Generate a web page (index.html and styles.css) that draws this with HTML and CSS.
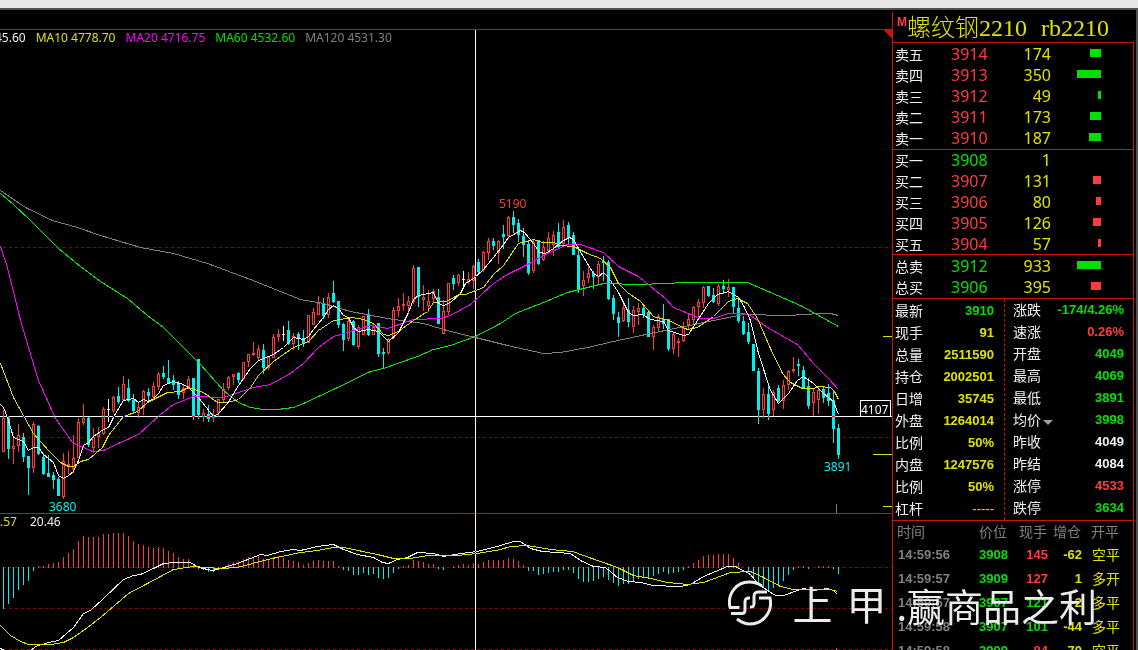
FILE: index.html
```html
<!DOCTYPE html>
<html lang="zh-CN">
<head>
<meta charset="utf-8">
<title>螺纹钢2210 rb2210</title>
<link rel="stylesheet" href="styles.css">
</head>
<body>
<div class="toolbar"></div>
<main class="terminal">
  <section class="chart">
    <svg class="plot" viewBox="0 10 892 640" preserveAspectRatio="xMaxYMin slice" role="img" aria-label="K线与MACD">
      <path class="grid" d="M3 247.500H892M3 437.500H892M3 567.500H892M3 608.500H892M3 649.500H892"/>
      <path class="frame" d="M0 29.500H892M0 513.500H892"/>
      <path class="corner" d="M882 29H892V39Z"/>
      <path class="tick" d="M883 336.500H892M873 454.500H892M883 506.500H892"/>
      <path class="mark" d="M836.500 504V513M836.500 648V650"/>
      <g id="macd"></g>
      <g id="candles"></g>
      <g id="lines"></g>
      <text class="note up" x="499" y="208">5190</text>
      <text class="note down" x="49" y="511">3680</text>
      <text class="note down" x="824" y="471">3891</text>
      <path class="cross" d="M0 416.500H892M475.500 30V650"/>
      <rect class="tagbox" x="860.500" y="400.500" width="30" height="16"/>
      <text class="note tag" x="861" y="414">4107</text>
    </svg>
    <div class="pane price">
      <span class="c-white">45.60</span><span class="c-yellow">MA10 4778.70</span><span class="c-magenta">MA20 4716.75</span><span class="c-green">MA60 4532.60</span><span class="c-grey">MA120 4531.30</span>
    </div>
    <div class="pane macd"><span class="c-yellow">.57</span><span class="c-white">20.46</span></div>
  </section>

  <aside class="quote">
    <h1 class="title"><sup>M</sup><span>螺纹钢2210</span><span>rb2210</span></h1>

    <div class="box">
      <table class="book">
        <tbody>
          <tr><th>卖五</th><td class="c-red">3914</td><td class="c-yellow">174</td><td><i class="bar sell" style="width:11px"></i></td></tr>
          <tr><th>卖四</th><td class="c-red">3913</td><td class="c-yellow">350</td><td><i class="bar sell" style="width:24px"></i></td></tr>
          <tr><th>卖三</th><td class="c-red">3912</td><td class="c-yellow">49</td><td><i class="bar sell" style="width:3px"></i></td></tr>
          <tr><th>卖二</th><td class="c-red">3911</td><td class="c-yellow">173</td><td><i class="bar sell" style="width:11px"></i></td></tr>
          <tr><th>卖一</th><td class="c-red">3910</td><td class="c-yellow">187</td><td><i class="bar sell" style="width:12px"></i></td></tr>
        </tbody>
        <tbody>
          <tr><th>买一</th><td class="c-green">3908</td><td class="c-yellow">1</td><td></td></tr>
          <tr><th>买二</th><td class="c-red">3907</td><td class="c-yellow">131</td><td><i class="bar buy" style="width:8px"></i></td></tr>
          <tr><th>买三</th><td class="c-red">3906</td><td class="c-yellow">80</td><td><i class="bar buy" style="width:5px"></i></td></tr>
          <tr><th>买四</th><td class="c-red">3905</td><td class="c-yellow">126</td><td><i class="bar buy" style="width:8px"></i></td></tr>
          <tr><th>买五</th><td class="c-red">3904</td><td class="c-yellow">57</td><td><i class="bar buy" style="width:3px"></i></td></tr>
        </tbody>
        <tbody class="total">
          <tr><th>总卖</th><td class="c-green">3912</td><td class="c-yellow">933</td><td><i class="bar sell" style="width:24px"></i></td></tr>
          <tr><th>总买</th><td class="c-green">3906</td><td class="c-yellow">395</td><td><i class="bar buy" style="width:10px"></i></td></tr>
        </tbody>
      </table>

      <div class="stats">
        <table class="stat left">
          <tbody>
            <tr><th>最新</th><td class="c-green">3910</td></tr>
            <tr><th>现手</th><td class="c-yellow">91</td></tr>
            <tr><th>总量</th><td class="c-yellow">2511590</td></tr>
            <tr><th>持仓</th><td class="c-yellow">2002501</td></tr>
            <tr><th>日增</th><td class="c-yellow">35745</td></tr>
            <tr><th>外盘</th><td class="c-yellow">1264014</td></tr>
            <tr><th>比例</th><td class="c-yellow">50%</td></tr>
            <tr><th>内盘</th><td class="c-yellow">1247576</td></tr>
            <tr><th>比例</th><td class="c-yellow">50%</td></tr>
            <tr><th>杠杆</th><td class="c-yellow dash">-----</td></tr>
          </tbody>
        </table>
        <table class="stat right">
          <tbody>
            <tr><th>涨跌</th><td class="c-green">-174/4.26%</td></tr>
            <tr><th>速涨</th><td class="c-red">0.26%</td></tr>
            <tr><th>开盘</th><td class="c-green">4049</td></tr>
            <tr><th>最高</th><td class="c-green">4069</td></tr>
            <tr><th>最低</th><td class="c-green">3891</td></tr>
            <tr><th>均价<button class="drop" type="button" aria-label="均价"></button></th><td class="c-green">3998</td></tr>
            <tr><th>昨收</th><td class="c-white">4049</td></tr>
            <tr><th>昨结</th><td class="c-white">4084</td></tr>
            <tr><th>涨停</th><td class="c-red">4533</td></tr>
            <tr><th>跌停</th><td class="c-green">3634</td></tr>
          </tbody>
        </table>
      </div>

      <table class="trades">
        <thead><tr><th>时间</th><th>价位</th><th>现手</th><th>增仓</th><th>开平</th></tr></thead>
        <tbody>
          <tr><td>14:59:56</td><td class="c-green">3908</td><td class="c-red">145</td><td class="c-yellow">-62</td><td class="c-yellow kind">空平</td></tr>
          <tr><td>14:59:57</td><td class="c-green">3909</td><td class="c-red">127</td><td class="c-yellow">1</td><td class="c-yellow kind">多开</td></tr>
          <tr><td>14:59:57</td><td class="c-green">3907</td><td class="c-green">121</td><td class="c-yellow">-2</td><td class="c-yellow kind">多平</td></tr>
          <tr><td>14:59:58</td><td class="c-green">3907</td><td class="c-green">101</td><td class="c-yellow">-44</td><td class="c-yellow kind">多平</td></tr>
          <tr><td>14:59:58</td><td class="c-green">3909</td><td class="c-red">84</td><td class="c-yellow">-70</td><td class="c-yellow kind">空平</td></tr>
        </tbody>
      </table>
    </div>
  </aside>

  <div class="watermark">
    <svg class="logo" viewBox="0 0 44 46" aria-hidden="true">
      <path d="M2 27.500C-1 13 9 2 21 2C26 2 30 3 34 6M1 27.500H11.500M3 33.500H14C16.500 33.500 17 32 17 30V22C17 19 18 18 21 18H22M22 27H23C25.500 27 26 26 26 23V17C26 13 27 12 30 12H39M31 18H42C45 32 35 44 22 44C17 44 13 42 9 39"/>
    </svg>
    <span class="brand"><span>上</span><span>甲</span></span>
    <span class="motto">.赢商品之利</span>
  </div>
</main>
<script src="chart.js"></script>
</body>
</html>
```

FILE: styles.css
```css
* { box-sizing: border-box; }

body {
  margin: 0;
  height: 100vh;
  overflow: hidden;
  display: flex;
  flex-direction: column;
  background: #000;
  color: #f0f0f0;
  font-family: "Noto Sans", "Noto Sans CJK SC", sans-serif;
}

.toolbar {
  flex: none;
  height: 10px;
  background: #e6e6e6;
  border-bottom: 2px solid #505050;
}

.terminal {
  position: relative;
  flex: 1;
  min-height: 0;
  display: flex;
  border-right: 2px solid #505050;
}

.c-white { color: #f0f0f0; }
.c-yellow { color: #e1e100; }
.c-magenta { color: #f0f; }
.c-green { color: #00e100; }
.c-grey { color: #808080; }
.c-red { color: #ff3c3c; }

/* chart */
.chart {
  position: relative;
  flex: 1;
  min-width: 0;
  display: flex;
  flex-direction: column;
  padding-top: 20px;
}

.plot {
  position: absolute;
  inset: 0;
  width: 100%;
  height: 100%;
  shape-rendering: crispEdges;
}

.pane {
  display: flex;
  gap: 10px;
  font-size: 12px;
  line-height: 16px;
  white-space: nowrap;
}
.pane.price { flex: 0 0 484px; margin-left: -5px; }
.pane.macd { gap: 13px; }

.plot path, .plot polyline { fill: none; }
.plot .grid { stroke: #8c0000; stroke-dasharray: 3 3; }
.plot .frame { stroke: #c8140a; }
.plot path.corner { fill: #c8140a; }
.plot .tick { stroke: #e1e100; }
.plot .mark { stroke: #808080; }
.plot .cross { stroke: #fff; mix-blend-mode: difference; }
.plot .tagbox { fill: #000; stroke: #fff; }
.plot .rise { stroke: #ff3c3c; fill: #000; }
.plot .fall { stroke: #00f0f0; }
.plot .body { fill: #00f0f0; }
.plot .flat { stroke: #f0f0f0; }
.plot .ma5 { stroke: #f0f0f0; }
.plot .ma10 { stroke: #e1e100; }
.plot .ma20 { stroke: #f0f; }
.plot .ma60 { stroke: #00f000; }
.plot .ma120 { stroke: #808080; }

.note { font-size: 12px; }
.note.up { fill: #ff3c3c; }
.note.down { fill: #00f0f0; }
.note.tag { fill: #fff; }

/* quote panel */
.quote {
  flex: 0 0 242px;
  margin: 2px 2px 0 0;
  border-left: 1px solid #c8140a;
}

.title {
  display: flex;
  margin: 0;
  padding-left: 4px;
  height: 30px;
  font: 300 24px/32px "Liberation Serif", "Noto Sans CJK SC", serif;
  color: #e1e100;
  white-space: nowrap;
}
.title sup { font: 700 12px/20px "Liberation Sans", sans-serif; color: #ff3c3c; }
.title span + span { margin-left: 14px; }

.box {
  border-top: 1px solid #c8140a;
  border-right: 1px solid #c8140a;
}

table { display: block; border-spacing: 0; }
thead, tbody { display: block; }
th, td { padding: 0; text-align: left; }
th { font: 400 14px/20px "Noto Sans CJK SC", sans-serif; }

.book { font-size: 16px; line-height: 21px; }
.book tbody { border-bottom: 1px solid #c8140a; }
.book tbody.total { padding-top: 1px; }
.book tr {
  display: grid;
  grid-template-columns: 56px 60px 40px 50px;
  height: 21px;
  padding-left: 2px;
}
.book tbody:first-child { padding-top: 1px; }
.book tbody:nth-child(2) tr:last-child { height: 20px; }
.book td:nth-child(3) { text-align: right; }
.book td:last-child { display: flex; justify-content: flex-end; padding-top: 5px; }
.bar { height: 8px; }
.bar.sell { background: #00e100; }
.bar.buy { background: #ff3c3c; }

.stats {
  display: flex;
  border-bottom: 1px solid #c8140a;
}
.stat tr { display: flex; justify-content: space-between; height: 22px; }
.stat td { font: 700 13px/22px "Liberation Sans", sans-serif; }
.stat td.dash { font-weight: 400; }
.stat.left {
  flex: 0 0 112px;
  padding: 1px 10px 0 2px;
  border-right: 1px dashed #c8140a;
}
.stat.right { flex: 1; padding: 0 9px 0 8px; }
.drop {
  width: 10px;
  height: 5px;
  margin-left: 2px;
  padding: 0;
  border: 0;
  background: #a0a0a0;
  clip-path: polygon(0 0, 100% 0, 50% 100%);
}

.trades { font: 700 13px/24px "Liberation Sans", sans-serif; color: #808080; }
.trades tr {
  display: grid;
  grid-template-columns: 65px 45px 40px 34px 38px;
  padding-left: 5px;
}
.trades thead tr { height: 22px; padding-left: 4px; }
.trades th + th, .trades td + td { text-align: right; }
.trades td.kind { font: 400 14px/22px "Noto Sans CJK SC", sans-serif; }

/* watermark laid over chart and panel */
.watermark {
  position: absolute;
  right: 39px;
  bottom: 16px;
  display: flex;
  align-items: center;
  color: #ececec;
  font-family: "Noto Sans CJK SC", sans-serif;
  line-height: 54px;
  white-space: nowrap;
  pointer-events: none;
}
.logo { width: 44px; height: 46px; margin: 0 20px 4px 0; }
.logo path { fill: none; stroke: #ececec; stroke-width: 3; }
.brand { display: flex; gap: 14px; margin: 0 10px 4px 0; font-size: 40px; }
.motto { font-size: 38px; }
```

FILE: chart.js
```js
// Each bar sits 5px apart: kind, high, low, body top, body bottom (plot units).
const bars = `r410 452 418 452,c416 459 418 449,r438 464 446 449,r424 452 435 446,c433 462 437 457,c456 495 456 468,r422 473 424 468,c425 455 426 454,c453 475 457 474,c455 477 473 477,c472 489 475 480,c477 496 479 496,r453 499 461 497,r451 474 464 466,r435 473 458 469,r418 458 422 458,r404 425 418 423,c417 447 418 445,r428 453 437 448,r427 448 433 437,r407 435 409 434,w399 422 409 410,r396 413 397 411,c387 404 396 402,r376 401 384 400,c379 402 388 401,c394 414 400 411,r403 418 407 413,r390 415 391 408,c388 401 392 396,r382 399 386 397,r372 390 374 387,c366 379 373 377,c360 384 378 383,c375 390 380 385,c381 399 383 395,r385 399 388 393,r376 389 379 387,c378 420 378 417,c359 419 359 415,r409 422 413 417,c405 422 414 419,r409 422 415 418,r399 417 399 413,r383 403 389 400,r376 390 377 388,r374 385 374 377,c372 383 373 380,
r362 380 362 379,r354 367 354 362,r342 356 353 355,r345 361 349 358,c344 374 350 368,r357 370 357 368,r334 358 337 358,r329 342 334 337,w326 341 334 335,c321 345 330 344,r333 350 336 344,c332 350 334 339,c330 347 338 343,r315 343 315 343,r308 325 312 325,r296 315 303 315,c298 319 303 316,r293 318 297 315,c281 303 293 302,c301 328 301 325,c323 351 324 340,r317 341 321 339,c320 346 321 345,r325 349 327 347,r316 335 316 335,c309 336 314 335,r323 335 327 335,c323 357 323 354,c348 368 352 354,r338 355 339 353,r307 339 310 338,r298 317 306 311,r293 311 304 306,r296 314 301 306,r265 304 268 302,c267 307 267 297,r285 311 297 300,r290 312 301 306,r289 303 291 299,c289 324 297 324,r300 334 311 334,r283 315 283 312,
c275 290 278 284,r274 286 275 283,w271 287 279 280,r272 284 279 282,r265 289 266 281,c259 273 262 272,r251 272 252 270,r238 260 241 253,c238 250 241 246,r240 264 241 253,c225 249 234 237,r216 239 217 236,c211 233 217 225,c219 242 223 235,c228 257 236 245,c241 275 244 273,r240 273 242 271,c240 265 240 264,r241 261 247 260,r232 254 238 251,r231 256 235 245,c223 249 232 247,r220 245 227 244,c222 245 225 238,c232 255 235 255,c249 293 255 290,r271 296 280 286,r266 283 273 278,c271 289 273 277,r261 284 264 277,c256 281 261 263,c260 300 262 299,c295 320 298 314,c312 337 317 323,r302 322 308 321,c298 327 310 322,r306 333 310 327,r303 325 308 312,c305 318 308 315,c310 337 312 337,
r325 350 327 337,r314 332 316 328,c304 329 319 324,c319 351 319 349,r333 354 334 349,r338 357 341 343,r322 342 328 341,r313 330 319 325,r306 324 307 320,r299 317 302 307,r286 308 287 303,c286 297 286 296,c288 303 295 302,r284 306 286 304,c280 294 286 289,r279 297 287 290,c287 313 287 307,c299 323 308 321,c316 335 321 334,c323 344 332 342,c344 371 344 371,c368 424 371 410,r388 418 394 410,c386 420 394 414,r390 416 392 410,c385 402 388 401,r380 409 385 401,r370 390 371 385,r357 373 369 371,c359 376 364 366,c366 388 370 388,c378 409 386 406,r388 416 392 403,r386 414 390 400,c386 403 389 398,c384 406 393 401,c390 443 400 429,c424 459 428 455`;

// Histogram ends; the zero line is at 567, larger values hang below it.
const hist = [609,604,598,590,585,581,571,566,566,564,563,562,557,553,549,541,536,537,537,537,534,534,533,533,533,536,541,544,545,547,548,547,548,551,553,557,559,559,565,569,570,572,572,569,567,564,562,561,559,557,557,556,559,560,557,556,558,560,561,562,565,563,561,560,561,561,561,566,570,571,575,575,573,575,574,578,579,578,573,569,566,565,560,561,562,564,564,569,570,567,566,565,564,565,563,564,562,560,560,560,560,558,559,561,565,571,571,575,574,573,572,572,570,570,573,579,582,582,581,579,577,580,583,586,584,584,581,579,577,578,576,574,572,574,573,572,570,566,563,560,556,555,555,554,554,554,558,563,567,571,577,585,587,591,588,586,581,575,570,566,566,569,567,566,566,566,569,574];

const curves = {
  ma120: "0,190 25,207 52,220 77,227 100,235 140,247 173,253 207,263 250,279 300,299 323,303 350,311 387,318 423,323 450,331 475,337 507,345 543,353 560,352 587,347 613,341 650,333 713,320 743,314 787,315 820,313 830,313 838,315",
  ma60: "0,193 13,204 30,220 58,248 80,266 100,281 127,298 147,315 163,327 183,347 200,364 223,390 238,402 250,407 263,409 277,409 293,407 303,403 333,389 370,371 383,368 417,356 433,349 450,345 475,336 500,323 515,313 543,302 567,292 603,283 640,284 686,282 747,282 800,305 838,326",
  ma20: "0,246 7,267 20,320 38,380 55,418 72,442 92,451 103,450 118,443 138,434 160,414 173,404 193,396 223,397 253,387 270,384 290,373 303,363 318,347 333,336 347,332 370,325 387,328 413,319 440,318 450,315 470,304 480,295 493,283 507,274 533,261 543,255 567,244 580,244 603,252 618,266 638,276 650,286 665,298 673,307 700,318 713,318 728,313 742,313 750,315 767,327 797,344 813,363 828,378 838,389",
  ma10: "0,363 13,397 33,433 48,450 60,462 68,466 73,466 80,461 88,459 102,447 108,435 123,416 137,411 147,402 167,392 180,391 188,387 203,392 217,402 227,402 238,399 250,387 258,375 273,361 293,347 308,341 318,330 333,320 352,317 363,319 373,323 383,334 388,335 398,331 413,320 427,311 433,302 445,301 450,299 458,294 465,294 483,287 493,274 503,265 518,243 533,239 542,242 553,242 560,245 573,246 587,253 600,258 610,267 618,283 627,292 640,301 653,316 668,320 687,329 697,327 713,316 728,301 737,298 747,303 757,318 770,348 782,373 790,382 802,388 813,388 818,386 830,387 834,391 838,399",
  ma5: "0,404 3,407 7,417 13,437 23,441 28,450 33,447 38,447 43,454 53,462 58,475 63,478 68,475 73,471 78,460 83,445 88,442 93,436 103,429 108,427 115,413 123,400 133,398 138,402 143,399 148,401 153,398 158,393 163,385 173,381 183,384 188,387 198,397 213,416 218,413 227,403 238,385 250,368 258,360 273,354 283,347 293,337 303,339 308,336 313,329 323,317 328,309 333,305 338,308 343,315 348,317 353,327 358,331 368,329 378,331 388,341 398,332 408,312 413,299 418,295 428,293 433,292 438,303 443,305 450,302 460,293 465,283 473,278 483,269 493,257 503,244 508,237 520,230 524,232 533,243 539,252 545,253 553,248 563,240 569,237 573,239 582,255 593,273 598,276 603,272 608,277 618,292 628,312 633,315 642,314 650,319 663,321 668,330 683,335 688,334 695,323 708,303 717,294 728,291 738,297 743,305 750,320 758,353 770,390 778,403 788,393 797,380 803,376 813,383 823,393 833,401 838,414"
};

const macdCurves = {
  ma5: "0,648 8,652 28,652 35,646 48,642 58,640 73,627 83,613 90,610 103,598 123,579 133,575 140,574 153,568 163,563 175,562 190,562 198,567 212,570 220,568 237,563 250,558 260,554 267,555 280,551 293,549 300,550 317,546 333,544 343,549 357,554 373,557 382,562 388,563 397,559 407,557 417,552 433,553 443,556 460,553 477,551 500,545 513,541 520,541 530,548 542,551 570,553 580,560 593,566 605,567 617,577 628,581 640,582 653,585 663,585 668,586 680,586 690,584 703,576 727,566 735,566 750,574 758,584 775,595 783,595 797,590 803,588 813,590 827,588 833,590 837,594",
  ma10: "0,625 10,635 20,641 28,644 50,644 63,642 73,637 87,627 100,617 128,593 147,583 173,569 193,566 220,568 237,567 267,559 300,552 317,550 333,547 343,547 377,554 393,558 410,558 427,555 457,555 477,553 500,549 510,546 527,545 550,549 572,551 583,555 600,561 617,567 633,575 650,578 667,582 687,584 703,582 730,572 750,571 763,577 780,586 793,589 830,589 837,591"
};

const NS = "http://www.w3.org/2000/svg";
function add(parent, tag, attrs) {
  const node = document.createElementNS(NS, tag);
  for (const key in attrs) node.setAttribute(key, attrs[key]);
  parent.appendChild(node);
}

const candles = document.getElementById("candles");
bars.split(",").forEach((entry, i) => {
  const text = entry.trim();
  const [high, low, top, bottom] = text.slice(1).split(" ").map(Number);
  const x = 3 + i * 5;
  const kind = { r: "rise", c: "fall", w: "flat" }[text[0]];
  add(candles, "path", { class: kind, d: `M${x + 0.5} ${high}V${low}` });
  if (kind === "rise") {
    add(candles, "rect", { class: "rise", x: x - 0.5, y: top + 0.5, width: 2, height: Math.max(1, bottom - top - 1) });
  } else if (kind === "fall") {
    add(candles, "rect", { class: "body", x: x - 1, y: top, width: 3, height: bottom - top });
  } else {
    add(candles, "path", { class: "flat", d: `M${x - 1} ${top + 0.5}h3` });
  }
});

const macd = document.getElementById("macd");
hist.forEach((end, i) => {
  if (end === 567) return;
  const x = 3.5 + i * 5;
  add(macd, "path", { class: end < 567 ? "rise" : "fall", d: `M${x} ${end < 567 ? 568 : 567}V${end}` });
});

const lines = document.getElementById("lines");
[curves, macdCurves].forEach(set => {
  for (const name in set) {
    const points = set[name].split(" ").map(p => p.split(",").map(v => +v + 0.5).join(",")).join(" ");
    add(lines, "polyline", { class: name, points });
  }
});
```
